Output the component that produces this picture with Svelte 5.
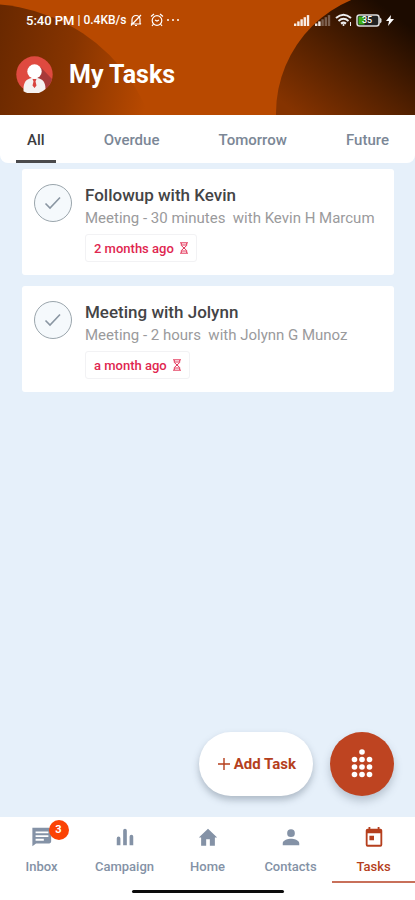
<script>
  const tabs = ['All', 'Overdue', 'Tomorrow', 'Future'];
  let activeTab = $state('All');

  const tasks = [
    { title: 'Followup with Kevin', detail: 'Meeting - 30 minutes\u00a0 with Kevin H Marcum', due: '2 months ago' },
    { title: 'Meeting with Jolynn', detail: 'Meeting - 2 hours\u00a0 with Jolynn G Munoz', due: 'a month ago' }
  ];

  const nav = [
    { label: 'Inbox', badge: 3, path: 'M1.500 2H20a2 2 0 0 1 2 2v13a2 2 0 0 1-2 2H5.500l-4 3zM5 6v2h14V6zM5 10v2h14v-2zM5 14v2h9v-2z' },
    { label: 'Campaign', path: 'M3 13.500a2 2 0 0 1 4 0V21H3zM10 5a2 2 0 0 1 4 0v16h-4zM17 11.500a2 2 0 0 1 4 0V21h-4z' },
    { label: 'Home', path: 'M10 21.500v-7h4v7h5.500v-9H22L12 3 2 12.500h2.500v9z' },
    { label: 'Contacts', path: 'M12 12a4.200 4.200 0 1 0 0-8.400 4.200 4.200 0 0 0 0 8.400zm0 2c-3 0-9 1.500-9 4.700V21h18v-2.300c0-3.200-6-4.700-9-4.700z' },
    { label: 'Tasks', path: 'M19 3h-1V1h-2v2H8V1H6v2H5a2 2 0 0 0-2 2v15.500a2 2 0 0 0 2 2h14a2 2 0 0 0 2-2V5a2 2 0 0 0-2-2zm0 17.500H5V8h14v12.500zM7 10.500h5v5H7z' }
  ];
  const current = 'Tasks';

  const dots = [[13, 3], ...[10.5, 18, 25.5].flatMap((y) => [5.5, 13, 20.5].map((x) => [x, y]))];
</script>

<div class="app">
  <header>
    <svg class="backdrop" viewBox="0 0 415 116" preserveAspectRatio="none" aria-hidden="true">
      <defs>
        <linearGradient id="left" x1="0" y1="0" x2="160" y2="30" gradientUnits="userSpaceOnUse">
          <stop offset="0" stop-color="#682800" />
          <stop offset=".5" stop-color="#863400" />
          <stop offset="1" stop-color="#b84900" />
        </linearGradient>
        <linearGradient id="right" x1="310" y1="125" x2="395" y2="15" gradientUnits="userSpaceOnUse">
          <stop offset="0" stop-color="#853300" />
          <stop offset=".5" stop-color="#522000" />
          <stop offset="1" stop-color="#1c0b00" />
        </linearGradient>
      </defs>
      <circle cx="-15" cy="180" r="176" fill="url(#left)" />
      <circle cx="400" cy="114" r="124" fill="url(#right)" />
    </svg>
    <div class="status">
      <div class="group">
        <span class="clock">5:40 PM</span>
        <span class="rate">| 0.4KB/s</span>
        <svg width="14" height="14" viewBox="0 0 14 14" fill="none" stroke="#fff" stroke-width="1.200">
          <path d="M3 10.500V6.500a4 4 0 0 1 8 0v4l1 .5H2zM6 12.500h2M2 12.500L12 2" />
        </svg>
        <svg class="alarm" width="14" height="14" viewBox="0 0 14 14" fill="none" stroke="#fff" stroke-width="1.200">
          <circle cx="7" cy="7.500" r="4.800" /><path d="M1 3.500L4 1M13 3.500L10 1M5 7l2 1 2-1M3.500 11L2 13M10.500 11l1.500 2" />
        </svg>
        <svg width="14" height="14" viewBox="0 0 14 14" fill="#fff">
          <circle cx="1" cy="7" r="1" /><circle cx="6" cy="7" r="1" /><circle cx="11" cy="7" r="1" />
        </svg>
      </div>
      <div class="group right">
        {#each [5, 2] as strength}
          <svg class="signal" width="17" height="12" viewBox="0 0 17 12" fill="#fff">
            {#each [0, 1, 2, 3, 4] as i}
              <rect x={1 + i * 3.2} y={9.5 - i * 2.1} width="2.400" height={2.5 + i * 2.1} opacity={i < strength ? 0.9 : 0.3} />
            {/each}
          </svg>
        {/each}
        <svg class="wifi" width="17" height="14" viewBox="0 0 17 14" fill="none" stroke="#eee" stroke-width="2">
          <path d="M1 5q7.500-6.500 15 0M3.500 7.900q5-4.200 10 0M6 10.600q2.500-2 5 0" />
          <circle cx="8.500" cy="12" r="1" fill="#eee" stroke="none" />
          <path d="M15.500 9v4" stroke-width="1" />
        </svg>
        <div class="battery">
          <svg width="26" height="13" viewBox="0 0 26 13">
            <rect x="1" y="1" width="22" height="11" rx="2.500" fill="#222" stroke="#ddd" stroke-width="1.500" />
            <path d="M23.500 3l2 2v3l-2 2z" fill="#ddd" />
            <rect x="2.500" y="2.500" width="6" height="8" fill="#3fae18" />
          </svg>
          <span>35</span>
        </div>
        <svg width="8" height="13" viewBox="0 0 8 13" fill="#fff"><path d="M5 1L0 7h3L2 12l6-7H4.500z" /></svg>
      </div>
    </div>
    <div class="title">
      <svg width="37" height="37" viewBox="0 0 37 37" aria-label="Profile" role="img">
        <circle cx="18.500" cy="18.500" r="18.200" fill="#df4a40" />
        <path d="M24.500 11L36 23a18 18 0 0 1-10 12L17 27z" fill="#a7393a" />
        <path d="M7.500 33c0-7 3-10 8-11h6c5 1 8 4 8 11a18 18 0 0 1-22 2.200z" fill="#f4f1f1" />
        <circle cx="18.500" cy="15.500" r="7.200" fill="#fff" />
        <path d="M16.500 23h4l-1 2.500 1 4-2 2.500-2-2.500 1-4z" fill="#d8433f" />
      </svg>
      <h1>My Tasks</h1>
    </div>
  </header>

  <div class="tabs" role="tablist">
    {#each tabs as tab}
      <button role="tab" aria-selected={tab === activeTab} class:active={tab === activeTab} onclick={() => (activeTab = tab)}>{tab}</button>
    {/each}
  </div>

  <main>
    {#each tasks as task}
      <article>
        <button class="check" aria-label="Complete {task.title}">
          <svg width="20" height="16" viewBox="0 0 20 16" fill="none" stroke="#8a96a2" stroke-width="1.600"><path d="M2.500 8.500l4.500 4.500L17 2.500" /></svg>
        </button>
        <div class="body">
          <h2>{task.title}</h2>
          <p>{task.detail}</p>
          <span class="due">
            {task.due}
            <svg width="10" height="12" viewBox="0 0 10 12" fill="none" stroke="#e3375b"><path d="M1 .8h8M1 11.200h8M2.300 1v2.500L5 6l2.700-2.500V1M2.300 11V8.500L5 6l2.700 2.500V11M2.500 3h5M2.500 9h5" /></svg>
          </span>
        </div>
      </article>
    {/each}
    <div class="actions">
      <button class="add">
        <svg width="12" height="12" viewBox="0 0 12 12" stroke="#b53f1d" stroke-width="1.400"><path d="M6 0v12M0 6h12" /></svg>
        Add Task
      </button>
      <button class="fab" aria-label="Menu">
        <svg width="26" height="30" viewBox="0 0 26 30" fill="#fff">
          {#each dots as [x, y]}<circle cx={x} cy={y} r="2.800" />{/each}
        </svg>
      </button>
    </div>
  </main>

  <nav>
    {#each nav as item}
      <a href="#{item.label.toLowerCase()}" class:current={item.label === current}>
        <span class="icon">
          <svg width="22" height="22" viewBox="0 0 24 24" fill="currentColor" fill-rule="evenodd"><path d={item.path} /></svg>
          {#if item.badge}<span class="badge">{item.badge}</span>{/if}
        </span>
        {item.label}
      </a>
    {/each}
    <div class="handle"></div>
  </nav>
</div>

<style>
  :global(body) { margin: 0; }
  .app {
    display: flex;
    flex-direction: column;
    min-height: 100vh;
    background: #e6f0fa;
    font-family: Roboto, "Liberation Sans", sans-serif;
  }
  button {
    font: inherit;
    border: 0;
    padding: 0;
    cursor: pointer;
  }
  svg { display: block; flex: none; }
  header {
    position: relative;
    background: #b84900;
    color: #fff;
    padding-bottom: 21px;
  }
  .backdrop {
    position: absolute;
    inset: 0;
    width: 100%;
    height: 100%;
  }
  .status {
    position: relative;
    display: flex;
    justify-content: space-between;
    padding: 12px 21px 0 26px;
    height: 16px;
  }
  .group {
    display: flex;
    align-items: center;
    gap: 3px;
    font-size: 12px;
    font-weight: 500;
  }
  .clock { font-size: 13px; }
  .alarm { margin-left: 4px; }
  .right { gap: 4px; }
  .battery { position: relative; }
  .battery span {
    position: absolute;
    inset: 0 4px 0 0;
    font-size: 9px;
    line-height: 13px;
    text-align: center;
  }
  .title {
    position: relative;
    display: flex;
    align-items: center;
    gap: 16px;
    padding: 26px 16px 0;
  }
  h1 {
    margin: 0;
    padding-top: 2px;
    font-size: 25px;
    line-height: 38px;
    font-weight: 700;
  }
  .tabs {
    display: flex;
    justify-content: space-between;
    padding: 0 15px 0 16px;
    background: #fff;
    border-radius: 0 0 8px 8px;
  }
  .tabs button {
    height: 48px;
    padding: 4px 11px 0;
    background: none;
    border-bottom: 3px solid transparent;
    color: #7b8796;
    font-size: 15px;
    font-weight: 500;
  }
  .tabs .active {
    color: #3c3c3e;
    border-color: #4a4a4c;
  }
  main {
    flex: 1;
    display: flex;
    flex-direction: column;
    gap: 11px;
    padding: 6px 21px 21px 22px;
  }
  article {
    display: flex;
    gap: 13px;
    padding: 15px 12px 13px;
    background: #fff;
    border-radius: 3px;
  }
  .check {
    display: grid;
    place-items: center;
    width: 38px;
    height: 38px;
    border: 1px solid #9aa5ac;
    border-radius: 50%;
    background: #f5f9fc;
  }
  .body {
    flex: 1;
    min-width: 0;
  }
  h2 {
    margin: 0;
    font-size: 17px;
    line-height: 22px;
    font-weight: 500;
    color: #444446;
  }
  p {
    margin: 1px 0 5px;
    font-size: 15px;
    line-height: 22px;
    color: #9a9a9c;
  }
  .due {
    display: inline-flex;
    align-items: center;
    gap: 5px;
    height: 26px;
    padding: 0 7px 0 8px;
    border: 1px solid #f2f2f4;
    border-radius: 3px;
    color: #e0264f;
    font-size: 13px;
    font-weight: 500;
  }
  .actions {
    display: flex;
    justify-content: flex-end;
    gap: 17px;
    margin-top: auto;
  }
  .add {
    display: flex;
    align-items: center;
    justify-content: center;
    gap: 4px;
    padding: 0 17px 0 19px;
    height: 64px;
    border-radius: 32px;
    background: #fff;
    color: #b53f1d;
    font-size: 15px;
    font-weight: 700;
    box-shadow: 0 4px 7px #5a6a7a66;
  }
  .fab {
    display: grid;
    place-items: center;
    width: 64px;
    height: 64px;
    border-radius: 50%;
    background: #be4421;
    box-shadow: 0 5px 8px #5a6a7a55;
  }
  nav {
    position: relative;
    display: flex;
    height: 83px;
    background: #fff;
  }
  nav a {
    flex: 1;
    display: flex;
    flex-direction: column;
    align-items: center;
    gap: 11px;
    height: 55px;
    padding-top: 9px;
    border-bottom: 2px solid transparent;
    color: #8492a6;
    font-size: 13px;
    line-height: 16px;
    font-weight: 500;
    text-decoration: none;
  }
  nav .current {
    color: #b53f1d;
    border-color: #c8705a;
  }
  .icon { position: relative; }
  .badge {
    position: absolute;
    top: -6px;
    left: 18px;
    width: 20px;
    height: 20px;
    border-radius: 50%;
    background: #fb4304;
    color: #fff;
    font-size: 11px;
    line-height: 20px;
    font-weight: 700;
    text-align: center;
  }
  .handle {
    position: absolute;
    bottom: 7px;
    left: 50%;
    width: 152px;
    height: 3px;
    margin-left: -76px;
    border-radius: 2px;
    background: #0c0c0c;
  }
</style>
